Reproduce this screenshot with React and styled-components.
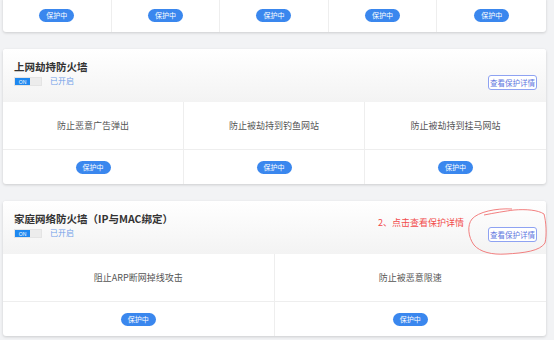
import React from 'react'
import styled, { createGlobalStyle } from 'styled-components'

const GlobalStyle = createGlobalStyle`
  html, body {
    margin: 0;
    padding: 0;
    background: #f2f3f5;
    font-family: "Noto Sans CJK SC", "Liberation Sans", sans-serif;
    overflow: hidden;
  }
`

const Page = styled.div`
  width: 554px;
  height: 340px;
  padding: 0 8px 0 3px;
  box-sizing: border-box;
  display: flex;
  flex-direction: column;
  gap: 17px;
  overflow: hidden;
`

const Card = styled.div`
  position: relative;
  background: #fff;
  border-radius: ${p => (p.$cut ? '0 0 3px 3px' : '3px')};
  box-shadow: 0 1px 3px rgba(0, 0, 0, 0.16);
  margin-top: ${p => p.$offset || 0}px;
  flex-shrink: 0;
`

const Header = styled.div`
  height: 53px;
  box-sizing: border-box;
  padding: 11px 9px 0 11px;
  background: linear-gradient(#ffffff, #f3f3f3);
  border-radius: 3px 3px 0 0;
  display: flex;
  justify-content: space-between;
  align-items: flex-start;
`

const HeaderLeft = styled.div`
  display: flex;
  flex-direction: column;
  gap: 2px;
`

const Title = styled.div`
  font-size: 10.5px;
  font-weight: 700;
  color: #333;
  line-height: 14px;
`

const StatusLine = styled.div`
  display: flex;
  align-items: center;
  gap: 8px;
`

const Toggle = styled.div`
  width: 28px;
  height: 9px;
  display: flex;
  background: #ececec;
  border: 1px solid #e4e4e4;
  box-sizing: border-box;
`

const ToggleOn = styled.div`
  width: 15px;
  background: #1e88f0;
  color: #fff;
  font-size: 5px;
  line-height: 8px;
  text-align: center;
  font-family: "Liberation Sans", sans-serif;
`

const StatusText = styled.span`
  font-size: 8px;
  color: #6f9ee8;
  line-height: 10px;
`

const HeaderRight = styled.div`
  display: flex;
  align-items: center;
  gap: 22px;
  margin-top: ${p => (p.$note ? '4px' : '15px')};
`

const Note = styled.span`
  font-size: 9px;
  color: #f24b4b;
  margin-top: -13px;
  margin-right: 2px;
`

const DetailButton = styled.div`
  width: 49px;
  height: 15px;
  box-sizing: border-box;
  border: 1px solid #8ea2f2;
  border-radius: 3px;
  background: #fff;
  color: #5f78e0;
  font-size: 7.5px;
  line-height: 13px;
  text-align: center;
  white-space: nowrap;
  margin-top: ${p => (p.$note ? '11px' : '0')};
`

const Grid = styled.div`
  display: grid;
  grid-template-columns: repeat(${p => p.$cols}, 1fr);
`

const Item = styled.div`
  height: ${p => p.$h}px;
  display: flex;
  align-items: center;
  justify-content: center;
  font-size: 9px;
  color: #555;
  border-right: 1px solid #eeeeee;
  border-bottom: ${p => (p.$last ? 'none' : '1px solid #eeeeee')};
  &:nth-child(${p => p.$cols}n) {
    border-right: none;
  }
`

const Badge = styled.span`
  width: 35px;
  height: 13px;
  border-radius: 7px;
  background: #3a87ee;
  color: #fff;
  font-size: 7px;
  line-height: 13px;
  text-align: center;
`

const Circle = styled.svg`
  position: absolute;
  left: 463px;
  top: 6px;
  pointer-events: none;
`

function FeatureCard({ title, items, note }) {
  const cols = items.length
  return (
    <Card>
      <Header>
        <HeaderLeft>
          <Title>{title}</Title>
          <StatusLine>
            <Toggle><ToggleOn>ON</ToggleOn></Toggle>
            <StatusText>已开启</StatusText>
          </StatusLine>
        </HeaderLeft>
        <HeaderRight $note={note}>
          {note && <Note>{note}</Note>}
          <DetailButton $note={note}>查看保护详情</DetailButton>
        </HeaderRight>
      </Header>
      <Grid $cols={cols}>
        {items.map((t, i) => (
          <Item key={'t' + i} $cols={cols} $h={47}>{t}</Item>
        ))}
        {items.map((t, i) => (
          <Item key={'b' + i} $cols={cols} $h={34} $last>
            <Badge>保护中</Badge>
          </Item>
        ))}
      </Grid>
      {note && (
        <Circle width="83" height="50" viewBox="0 0 83 50">
          <path
            d="M46 2 C30 1 12 5 6 12 C1 18 2 30 8 38 C14 45 26 48 40 47 C58 46 74 44 79 36 C81 28 80 14 78 7 C72 3 60 2 48 3 C40 4 28 6 18 8"
            fill="none"
            stroke="#f07272"
            strokeWidth="0.9"
          />
        </Circle>
      )}
    </Card>
  )
}

export default function App() {
  return (
    <>
      <GlobalStyle />
      <Page>
        <Card $cut $offset={-2}>
          <Grid $cols={5}>
            {[0, 1, 2, 3, 4].map(i => (
              <Item key={i} $cols={5} $h={34} $last>
                <Badge>保护中</Badge>
              </Item>
            ))}
          </Grid>
        </Card>
        <FeatureCard
          title="上网劫持防火墙"
          items={['防止恶意广告弹出', '防止被劫持到钓鱼网站', '防止被劫持到挂马网站']}
        />
        <FeatureCard
          title="家庭网络防火墙（IP与MAC绑定）"
          note="2、点击查看保护详情"
          items={['阻止ARP断网掉线攻击', '防止被恶意限速']}
        />
      </Page>
    </>
  )
}
